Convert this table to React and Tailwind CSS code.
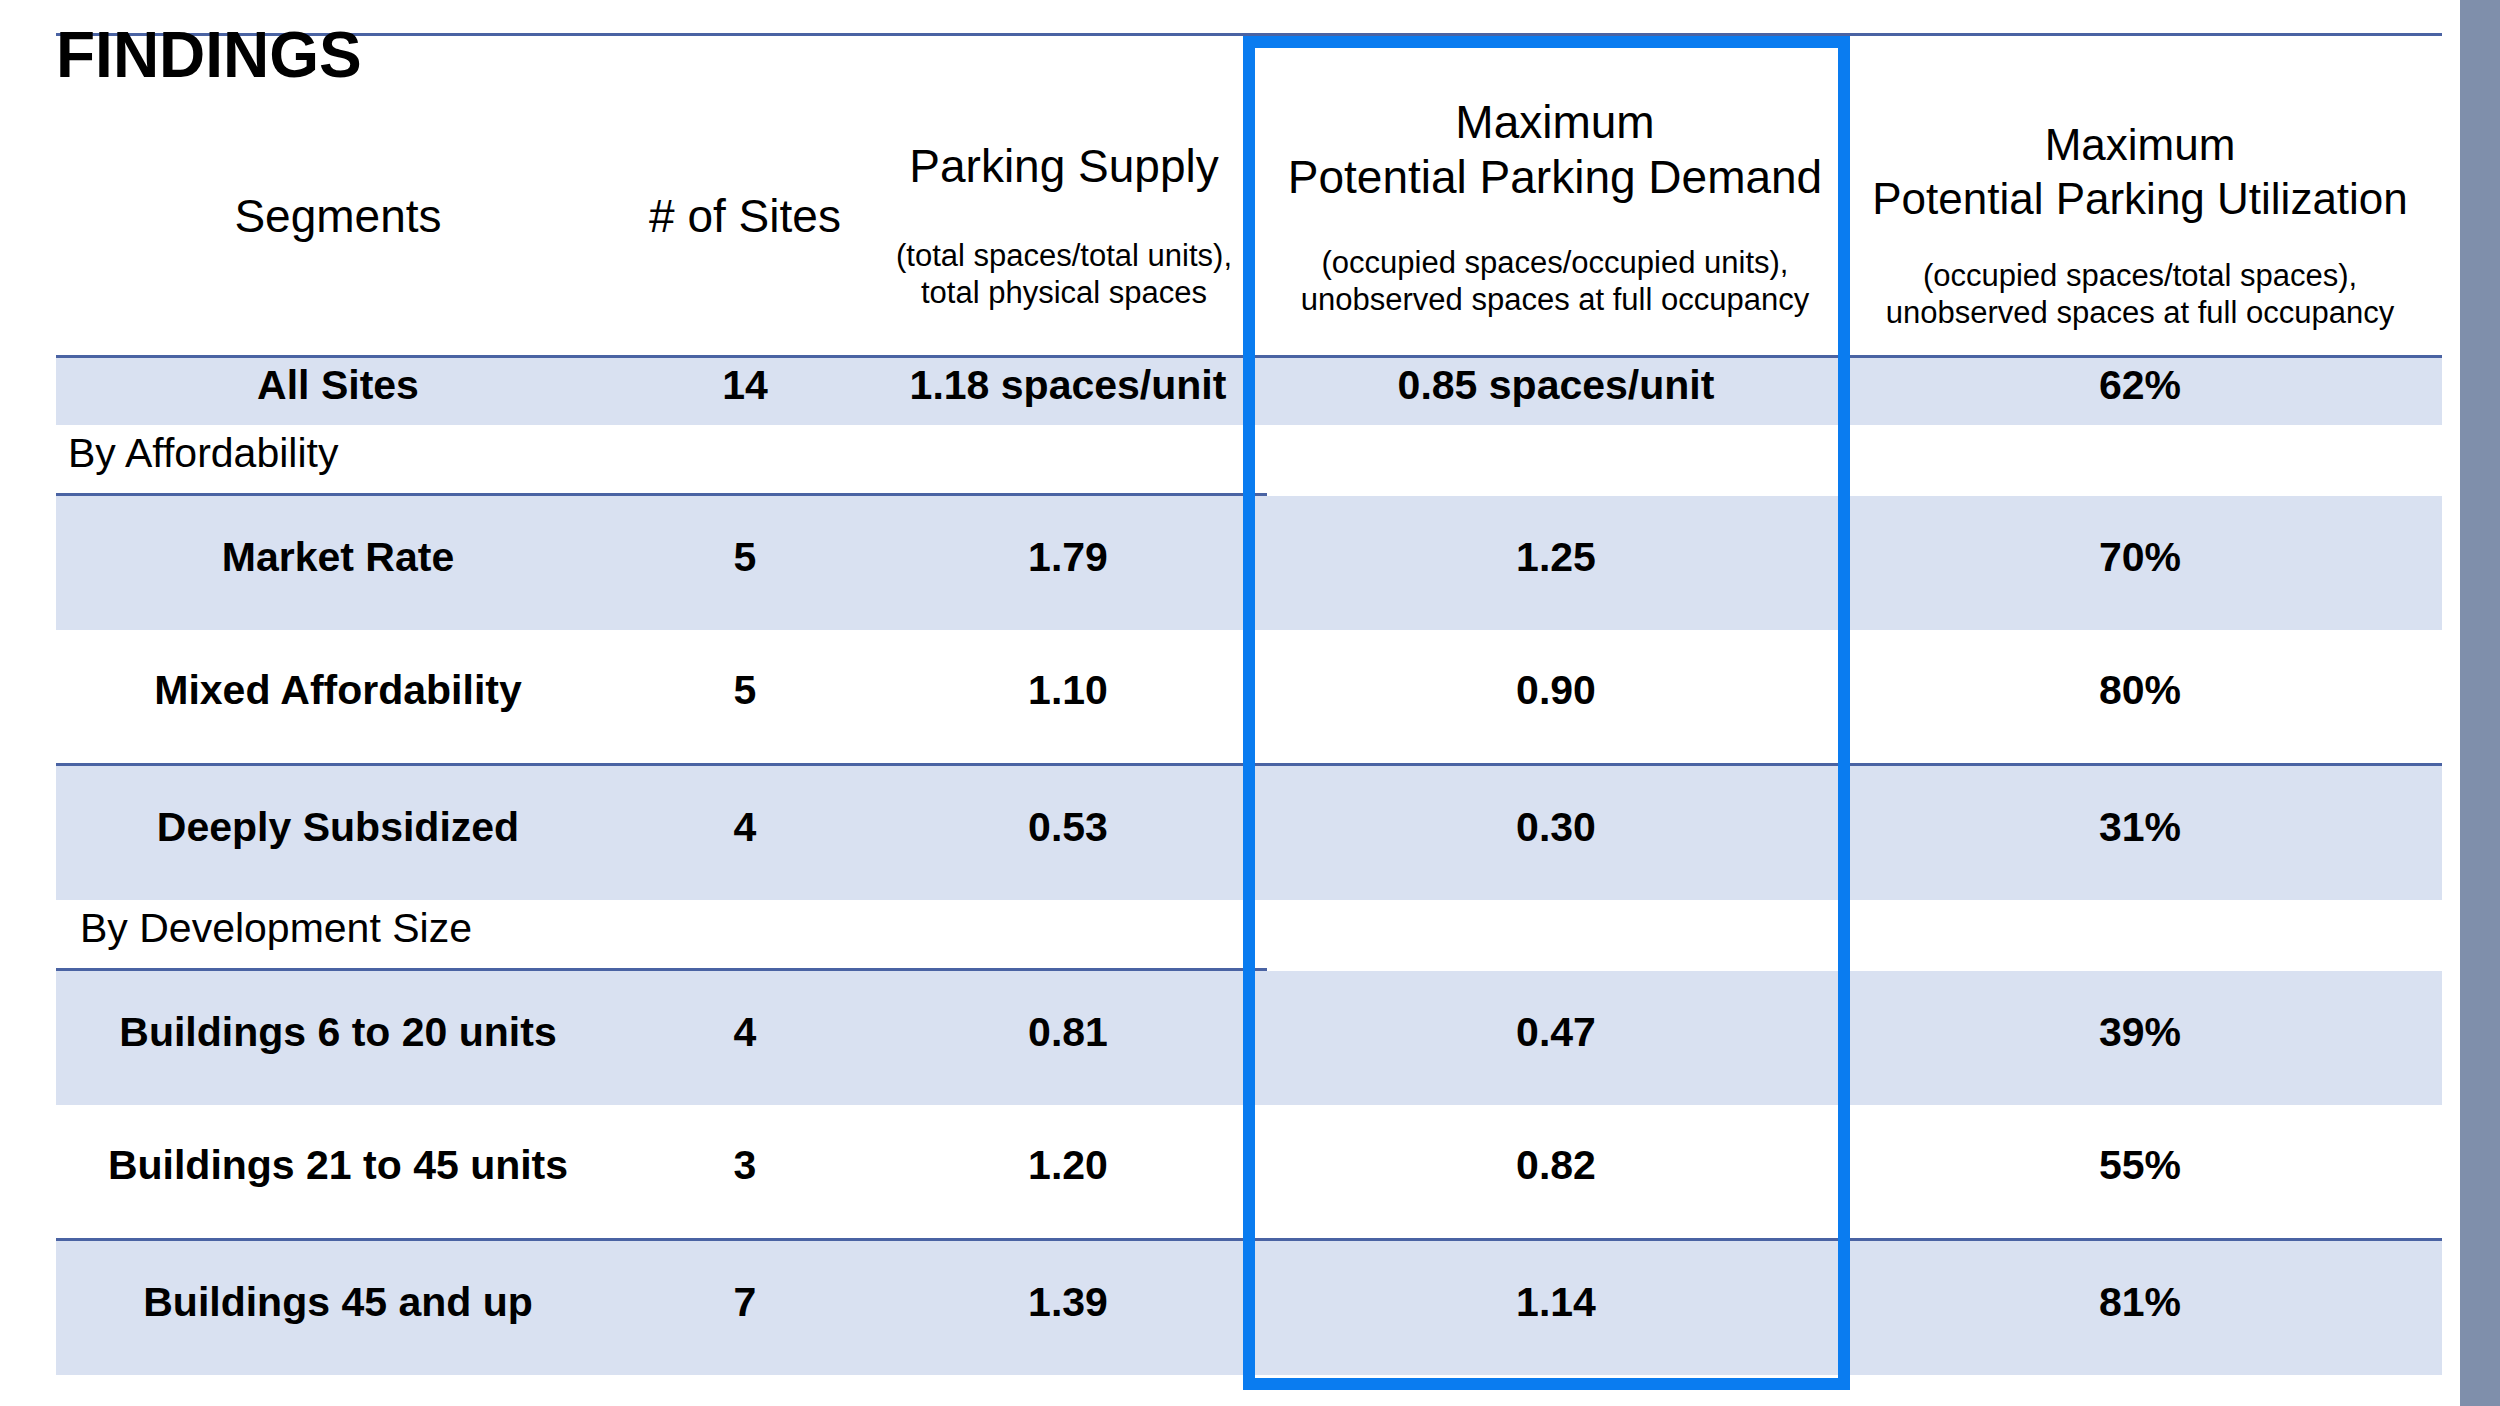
const font = { fontFamily: '"Liberation Sans", Arial, sans-serif' };

const rows = [
  { kind: "data", label: "All Sites", sites: "14", supply: "1.18 spaces/unit", demand: "0.85 spaces/unit", util: "62%", h: "h-[67px]", shade: true },
  { kind: "group", label: "By Affordability", h: "h-[68px]", pad: "pl-[12px]" },
  { kind: "line", partial: true },
  { kind: "data", label: "Market Rate", sites: "5", supply: "1.79", demand: "1.25", util: "70%", h: "h-[134px]", shade: true },
  { kind: "data", label: "Mixed Affordability", sites: "5", supply: "1.10", demand: "0.90", util: "80%", h: "h-[133px]" },
  { kind: "line" },
  { kind: "data", label: "Deeply Subsidized", sites: "4", supply: "0.53", demand: "0.30", util: "31%", h: "h-[134px]", shade: true },
  { kind: "group", label: "By Development Size", h: "h-[68px]", pad: "pl-[24px]" },
  { kind: "line", partial: true },
  { kind: "data", label: "Buildings 6 to 20 units", sites: "4", supply: "0.81", demand: "0.47", util: "39%", h: "h-[134px]", shade: true },
  { kind: "data", label: "Buildings 21 to 45 units", sites: "3", supply: "1.20", demand: "0.82", util: "55%", h: "h-[133px]" },
  { kind: "line" },
  { kind: "data", label: "Buildings 45 and up", sites: "7", supply: "1.39", demand: "1.14", util: "81%", h: "h-[134px]", shade: true },
];

const grid = "grid grid-cols-[564px_250px_380px_600px_592px]";

function SubText({ children, className }) {
  return (
    <div className={`text-[31px] leading-[37px] text-center ${className}`}>{children}</div>
  );
}

function DataRow({ row }) {
  return (
    <div className={`${grid} ${row.h} items-center pb-3 font-bold text-black text-[41px] leading-[47px] ${row.shade ? "bg-[#d9e1f1]" : "bg-white"}`}>
      <div className="text-center whitespace-nowrap">{row.label}</div>
      <div className="text-center">{row.sites}</div>
      <div className="text-center pl-4 whitespace-nowrap">{row.supply}</div>
      <div className="text-center pl-[12px] whitespace-nowrap">{row.demand}</div>
      <div className="text-center pr-3">{row.util}</div>
    </div>
  );
}

export default function App() {
  return (
    <div className="relative flex h-[1406px] w-[2500px] bg-white text-black overflow-hidden" style={font}>
      <div className="flex-1 pl-[56px] pt-[33px]">
        <div className="relative w-[2386px] border-t-[3px] border-[#4a63a3]">
          {/* header */}
          <div className={`${grid} h-[319px]`}>
            <div className="pt-[153px] text-center text-[46px] leading-[55px]">Segments</div>
            <div className="pt-[153px] text-center text-[46px] leading-[55px]">
              # of Sites
            </div>
            <div className="pt-[103px] pl-2 flex flex-col items-center">
              <div className="text-[46px] leading-[55px] whitespace-nowrap">Parking Supply</div>
              <SubText className="mt-[43px] whitespace-nowrap">
                (total spaces/total units),
                <br />
                total physical spaces
              </SubText>
            </div>
            <div className="pt-[59px] pl-[10px] flex flex-col items-center">
              <div className="text-[46px] leading-[55px] text-center whitespace-nowrap">
                Maximum
                <br />
                Potential Parking Demand
              </div>
              <SubText className="mt-[39px] whitespace-nowrap">
                (occupied spaces/occupied units),
                <br />
                unobserved spaces at full occupancy
              </SubText>
            </div>
            <div className="pt-[82px] pr-3 flex flex-col items-center">
              <div className="text-[44px] leading-[54px] text-center whitespace-nowrap">
                Maximum
                <br />
                Potential Parking Utilization
              </div>
              <SubText className="mt-[31px] whitespace-nowrap">
                (occupied spaces/total spaces),
                <br />
                unobserved spaces at full occupancy
              </SubText>
            </div>
          </div>
          <div className="h-[3px] bg-[#4a63a3]" />

          {rows.map((row, i) => {
            if (row.kind === "line") {
              return (
                <div
                  key={i}
                  className={`h-[3px] bg-[#4a63a3] ${row.partial ? "w-[1211px]" : "w-full"}`}
                />
              );
            }
            if (row.kind === "group") {
              return (
                <div key={i} className={`${row.h} ${row.pad} flex items-center pb-3 bg-white text-[41px] leading-[47px]`}>
                  {row.label}
                </div>
              );
            }
            return <DataRow key={i} row={row} />;
          })}

          {/* highlight box over the demand column */}
          <div className="absolute left-[1187px] top-0 w-[607px] h-[1354px] border-[12px] border-[#0a7cf0] pointer-events-none" />
        </div>
      </div>
      <div className="w-[40px] h-full bg-[#7f8fab]" />

      <div className="absolute left-[56px] top-[23px] text-[64px] leading-none font-bold">
        FINDINGS
      </div>
    </div>
  );
}
